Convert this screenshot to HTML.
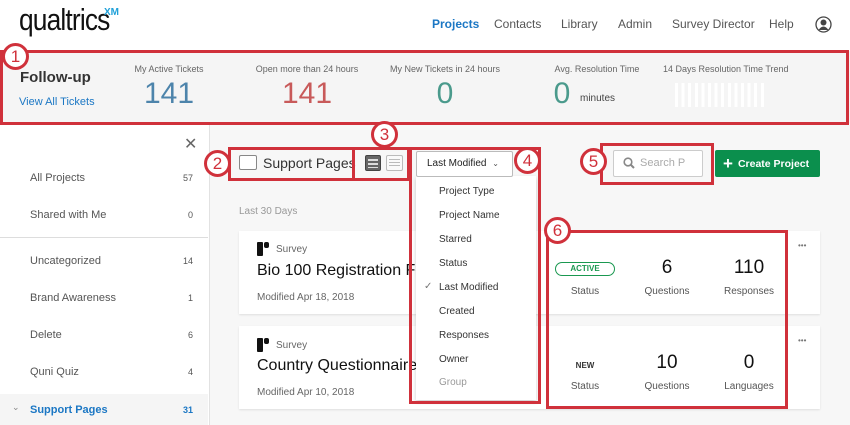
<!DOCTYPE html>
<html><head><meta charset="utf-8"><style>
*{margin:0;padding:0;box-sizing:border-box}
body{width:850px;height:425px;overflow:hidden;background:#fff;font-family:"Liberation Sans",sans-serif;position:relative;color:#333}
.a{position:absolute;white-space:nowrap}
.nav{top:17px;font-size:12px;color:#555}
.rb{position:absolute;border:3px solid #d0313b}
.c{position:absolute;width:27px;height:27px;border-radius:50%;border:3px solid #d0313b;background:#fff;color:#d0313b;font-size:17px;text-align:center;line-height:21px}
.lbl{top:64px;font-size:9px;color:#666;transform:translateX(-50%)}
.num{top:77px;font-size:30px;transform:translateX(-50%)}
.sb{left:30px;font-size:11px;color:#555}
.ct{left:170px;width:23px;text-align:right;font-size:9px;color:#555}
.mi{left:439px;font-size:10px;color:#333}
.card{position:absolute;left:239px;width:581px;height:83px;background:#fff;box-shadow:0 1px 2px rgba(0,0,0,.1)}
.cen{transform:translateX(-50%)}
</style></head><body>
<div class="a" style="left:19px;top:2px;font-size:31px;color:#111;letter-spacing:-1px;transform:scaleX(.85);transform-origin:left">qualtrics</div>
<div class="a" style="left:104px;top:7px;font-size:10px;font-weight:bold;color:#1fa0d8">XM</div>
<div class="a nav" style="left:432px;color:#1b77c4;font-weight:bold">Projects</div>
<div class="a nav" style="left:494px">Contacts</div>
<div class="a nav" style="left:561px">Library</div>
<div class="a nav" style="left:618px">Admin</div>
<div class="a nav" style="left:672px">Survey Director</div>
<div class="a nav" style="left:769px">Help</div>
<svg class="a" style="left:815px;top:16px" width="17" height="17" viewBox="0 0 17 17"><circle cx="8.5" cy="8.5" r="7.5" fill="none" stroke="#444" stroke-width="1.3"/><circle cx="8.5" cy="6.5" r="3" fill="#444"/><path d="M3.5 14 Q8.5 7 13.5 14" fill="#444"/></svg>

<div class="a" style="left:0;top:51px;width:850px;height:73px;background:#f5f5f5"></div>
<div class="a" style="left:20px;top:69px;font-size:15px;font-weight:bold;color:#333">Follow-up</div>
<div class="a" style="left:19px;top:96px;font-size:11px;color:#1b77c4">View All Tickets</div>
<div class="a lbl" style="left:169px">My Active Tickets</div>
<div class="a num" style="left:169px;color:#4d84ab">141</div>
<div class="a lbl" style="left:307px">Open more than 24 hours</div>
<div class="a num" style="left:307px;color:#c85a5a">141</div>
<div class="a lbl" style="left:445px">My New Tickets in 24 hours</div>
<div class="a num" style="left:445px;color:#4a9a8c">0</div>
<div class="a lbl" style="left:597px">Avg. Resolution Time</div>
<div class="a num" style="left:562px;color:#4a9a8c">0</div>
<div class="a" style="left:580px;top:93px;font-size:10px;color:#444">minutes</div>
<div class="a" style="left:663px;top:64px;font-size:9px;color:#666">14 Days Resolution Time Trend</div>
<div class="a" style="left:675px;top:83px;width:92px;height:24px;background:repeating-linear-gradient(90deg,#fff 0 3px,transparent 3px 6.6px)"></div>
<div class="rb" style="left:0;top:50px;width:849px;height:75px"></div>
<div class="c" style="left:2px;top:43px">1</div>

<div class="a" style="left:209px;top:125px;width:641px;height:300px;background:#f7f7f7;border-left:1px solid #e2e2e2"></div>
<div class="a" style="left:184px;top:134px;font-size:16px;color:#666">✕</div>
<div class="a sb" style="top:172px">All Projects</div><div class="a ct" style="top:173px">57</div>
<div class="a sb" style="top:209px">Shared with Me</div><div class="a ct" style="top:210px">0</div>
<div class="a" style="left:0;top:237px;width:208px;height:1px;background:#ddd"></div>
<div class="a sb" style="top:255px">Uncategorized</div><div class="a ct" style="top:256px">14</div>
<div class="a sb" style="top:292px">Brand Awareness</div><div class="a ct" style="top:293px">1</div>
<div class="a sb" style="top:329px">Delete</div><div class="a ct" style="top:330px">6</div>
<div class="a sb" style="top:366px">Quni Quiz</div><div class="a ct" style="top:367px">4</div>
<div class="a" style="left:0;top:394px;width:208px;height:31px;background:#f5f5f5"></div>
<div class="a" style="left:12px;top:402px;font-size:9px;color:#888">⌄</div>
<div class="a sb" style="top:404px;color:#1b77c4;font-weight:bold">Support Pages</div><div class="a ct" style="top:405px;color:#1b77c4;font-weight:bold">31</div>

<div class="a" style="left:239px;top:155px;width:18px;height:15px;border:1px solid #888;border-radius:2px;background:#fff"></div>
<div class="a" style="left:263px;top:155px;font-size:14px;color:#333">Support Pages</div>
<div class="a" style="left:365px;top:155px;width:16px;height:16px;background:#666;border-radius:2px;border:1px solid #444"></div>
<div class="a" style="left:368px;top:158px;width:10px;height:10px;background:repeating-linear-gradient(#666 0 1px,#ddd 1px 3px,#666 3px 4px)"></div>
<div class="a" style="left:386px;top:155px;width:17px;height:16px;background:#fafafa;border-radius:2px;border:1px solid #bbb"></div>
<div class="a" style="left:389px;top:159px;width:11px;height:8px;background:repeating-linear-gradient(#bbb 0 1px,transparent 1px 3px)"></div>
<div class="rb" style="left:228px;top:147px;width:127px;height:34px"></div>
<div class="rb" style="left:352px;top:147px;width:58px;height:34px"></div>
<div class="c" style="left:204px;top:150px">2</div>
<div class="c" style="left:371px;top:121px">3</div>

<div class="a" style="left:239px;top:206px;font-size:10px;color:#999">Last 30 Days</div>
<div class="card" style="top:231px"></div>
<div class="card" style="top:326px"></div>
<svg class="a" style="left:257px;top:242px" width="13" height="14"><rect x="0" y="0" width="6" height="14" rx="1" fill="#111"/><rect x="7" y="0" width="5" height="6" rx="2" fill="#111"/></svg>
<div class="a" style="left:276px;top:244px;font-size:10px;color:#666">Survey</div>
<div class="a" style="left:257px;top:262px;font-size:16px;color:#111">Bio 100 Registration For</div>
<div class="a" style="left:257px;top:292px;font-size:10px;color:#666">Modified Apr 18, 2018</div>
<svg class="a" style="left:257px;top:338px" width="13" height="14"><rect x="0" y="0" width="6" height="14" rx="1" fill="#111"/><rect x="7" y="0" width="5" height="6" rx="2" fill="#111"/></svg>
<div class="a" style="left:276px;top:340px;font-size:10px;color:#666">Survey</div>
<div class="a" style="left:257px;top:357px;font-size:16px;color:#111">Country Questionnaire</div>
<div class="a" style="left:257px;top:387px;font-size:10px;color:#666">Modified Apr 10, 2018</div>

<div class="a" style="left:555px;top:262px;width:60px;height:14px;border:1.5px solid #1a9850;border-radius:8px;color:#1a9850;font-size:8px;font-weight:bold;text-align:center;line-height:11px">ACTIVE</div>
<div class="a cen" style="left:585px;top:286px;font-size:10px;color:#555">Status</div>
<div class="a cen" style="left:667px;top:257px;font-size:19px;color:#111">6</div>
<div class="a cen" style="left:667px;top:286px;font-size:10px;color:#555">Questions</div>
<div class="a cen" style="left:749px;top:257px;font-size:19px;color:#111">110</div>
<div class="a cen" style="left:749px;top:286px;font-size:10px;color:#555">Responses</div>
<div class="a cen" style="left:585px;top:361px;font-size:8px;font-weight:bold;color:#333">NEW</div>
<div class="a cen" style="left:585px;top:381px;font-size:10px;color:#555">Status</div>
<div class="a cen" style="left:667px;top:352px;font-size:19px;color:#111">10</div>
<div class="a cen" style="left:667px;top:381px;font-size:10px;color:#555">Questions</div>
<div class="a cen" style="left:749px;top:352px;font-size:19px;color:#111">0</div>
<div class="a cen" style="left:749px;top:381px;font-size:10px;color:#555">Languages</div>
<div class="a" style="left:798px;top:241px;font-size:8px;color:#777;letter-spacing:0">•••</div>
<div class="a" style="left:798px;top:336px;font-size:8px;color:#777;letter-spacing:0">•••</div>
<div class="rb" style="left:546px;top:230px;width:242px;height:179px"></div>
<div class="c" style="left:544px;top:217px">6</div>

<div class="a" style="left:416px;top:176px;width:120px;height:224px;background:#fff;box-shadow:0 2px 4px rgba(0,0,0,.2)"></div>
<div class="a" style="left:416px;top:151px;width:97px;height:26px;background:#fff;border:1px solid #bbb;border-radius:2px;font-size:10px;line-height:24px;padding-left:10px;color:#222">Last Modified <span style="font-size:8px;color:#555;margin-left:3px">⌄</span></div>
<div class="a mi" style="top:186px">Project Type</div>
<div class="a mi" style="top:210px">Project Name</div>
<div class="a mi" style="top:234px">Starred</div>
<div class="a mi" style="top:258px">Status</div>
<div class="a" style="left:424px;top:281px;font-size:10px;color:#777">✓</div>
<div class="a mi" style="top:282px">Last Modified</div>
<div class="a mi" style="top:306px">Created</div>
<div class="a mi" style="top:330px">Responses</div>
<div class="a mi" style="top:354px">Owner</div>
<div class="a mi" style="top:377px;color:#999">Group</div>
<div class="rb" style="left:409px;top:147px;width:132px;height:257px"></div>
<div class="c" style="left:514px;top:147px">4</div>

<div class="a" style="left:613px;top:150px;width:90px;height:27px;background:#fff;border:1px solid #ccc;border-radius:2px"></div>
<svg class="a" style="left:623px;top:157px" width="12" height="12"><circle cx="5" cy="5" r="3.8" fill="none" stroke="#888" stroke-width="1.6"/><path d="M8 8 L11 11" stroke="#888" stroke-width="2"/></svg>
<div class="a" style="left:640px;top:157px;font-size:11px;color:#aaa">Search P</div>
<div class="rb" style="left:600px;top:143px;width:114px;height:42px"></div>
<div class="c" style="left:580px;top:148px">5</div>
<div class="a" style="left:715px;top:150px;width:105px;height:27px;background:#0b8f4d;border-radius:2px;color:#fff;font-size:10.5px;font-weight:bold;line-height:27px;padding-left:8px;overflow:hidden"><span style="font-size:17px;vertical-align:-2px;margin-right:5px">+</span>Create Project</div>
</body></html>
